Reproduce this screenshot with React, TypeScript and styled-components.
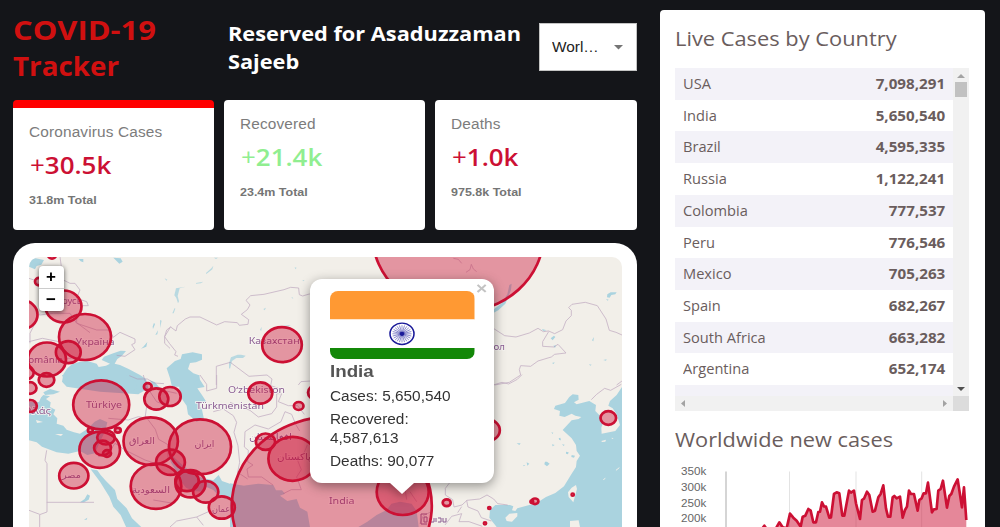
import React from "react";
import styled, { createGlobalStyle, css } from "styled-components";

const GlobalStyle = createGlobalStyle`
  * { box-sizing: border-box; }
  html, body { margin: 0; height: 527px; overflow: hidden; background: #141519; }
`;

const sans = `"Liberation Sans", Arial, sans-serif`;
const humanist = `"Open Sans", "Noto Sans", sans-serif`;
const RED = "#cc1034";

const widen = (k: number, origin = "left") => css`
  width: max-content;
  transform: scaleX(${k});
  transform-origin: ${origin} center;
`;

const Page = styled.div`
  display: flex;
  align-items: flex-start;
  gap: 23.5px;
  width: 1000px;
  height: 527px;
  padding: 10px 16px 0 13px;
  overflow: hidden;
`;
const Main = styled.main`
  display: flex;
  flex-direction: column;
  width: 623.5px;
  flex: none;
`;
const Header = styled.header`
  display: grid;
  grid-template-columns: 215px 310.5px 98px;
  align-items: center;
  height: 73px;
`;
const Title = styled.h1`
  margin: 0;
  padding-top: 1.5px;
  font: 700 27.5px/36.6px ${humanist};
  color: #d01010;
`;
const TitleLine = styled.span<{ $k: number }>`
  display: block;
  ${(p) => widen(p.$k)}
`;
const Subtitle = styled.h2`
  margin: 0;
  padding-top: 1px;
  font: 700 20.4px/27.6px ${humanist};
  color: #fff;
  ${widen(1.067)}
`;
const Select = styled.div`
  display: flex;
  align-items: center;
  justify-content: space-between;
  height: 48px;
  padding: 0 13px 0 12.5px;
  border: 1px solid #c4c4c4;
  background: #fff;
`;
const SelectValue = styled.span`
  font: 400 14px/20px ${sans};
  color: #222;
  ${widen(1.1)}
`;
const Stats = styled.section`
  display: grid;
  grid-template-columns: repeat(3, 1fr);
  gap: 10px;
  margin-top: 17px;
  height: 130px;
`;
const Card = styled.article<{ $active?: boolean }>`
  padding: 13.5px 16px;
  border-radius: 4px;
  background: #fff;
  border-top: ${(p) => (p.$active ? "8.5px solid #ff0000" : "0")};
`;
const CardLabel = styled.div`
  font: 400 14px/20px ${sans};
  color: #7c7c7c;
  letter-spacing: 0.13px;
  ${widen(1.1)}
`;
const CardValue = styled.div<{ $color: string }>`
  margin: 7px 0 0 1px;
  font: 600 24px/32px ${humanist};
  color: ${(p) => p.$color};
  ${widen(1.08)}
`;
const Plus = styled.span`
  font-weight: 400;
`;
const CardTotal = styled.div`
  margin-top: 12.5px;
  font: 700 11px/14px ${sans};
  color: #757575;
  ${widen(1.135)}
`;
const MapCard = styled.section`
  margin-top: 13px;
  padding: 14px 15px 14px 15.5px;
  height: 320px;
  border-radius: 22px 22px 0 0;
  background: #fff;
`;
const MapFrame = styled.div`
  position: relative;
  height: 300px;
  overflow: hidden;
  border-radius: 10px 10px 0 0;
  background: #f2efe9;
`;
const MapCanvas = styled.svg`
  display: block;
  width: 593px;
  height: 270px;
`;
const ZoomControl = styled.div`
  position: absolute;
  left: 10px;
  top: 8.5px;
  width: 25px;
  border-radius: 4px;
  background: #fff;
  box-shadow: 0 1px 5px rgba(0, 0, 0, 0.65);
`;
const ZoomButton = styled.div`
  height: 22.7px;
  font: 700 17px/22px ${sans};
  text-align: center;
  color: #000;
  & + & {
    border-top: 1px solid #ccc;
  }
`;
const Popup = styled.div`
  position: absolute;
  left: 281px;
  top: 21.5px;
  width: 184.5px;
  height: 204.5px;
  padding: 12px 20.5px;
  border-radius: 12px;
  background: #fff;
  color: #333;
  filter: drop-shadow(0 3px 6px rgba(0, 0, 0, 0.4));
  &::after {
    content: "";
    position: absolute;
    left: 80px;
    top: 204px;
    border: 12.5px solid transparent;
    border-top: 11px solid #fff;
    border-bottom: 0;
  }
`;
const Close = styled.span`
  position: absolute;
  right: 7.5px;
  top: 1px;
  font: 700 16px/17px ${sans};
  color: #c3c3c3;
  transform: scaleX(1.2);
`;
const Flag = styled.svg`
  display: block;
  width: 144.5px;
  height: 68.5px;
  border-radius: 8px;
`;
const PopupName = styled.div`
  margin: 2px 0 7px;
  font: 700 17.2px/20px ${sans};
  color: #555;
  ${widen(1.09)}
`;
const PopupLine = styled.div`
  margin-bottom: 4.3px;
  font: 400 13.8px/18.9px ${sans};
  ${widen(1.115)}
`;
const Side = styled.aside`
  width: 324.5px;
  height: 600px;
  flex: none;
  margin-top: -0.5px;
  padding: 15px 15px;
  border-radius: 4px;
  background: #fff;
  color: #6a5d5d;
`;
const SideTitle = styled.h3<{ $k: number }>`
  margin: 0;
  font: 400 20.6px/27px ${humanist};
  ${(p) => widen(p.$k)}
`;
const ListBox = styled.div`
  display: grid;
  grid-template: 328px 14.7px / 278px 16px;
  margin: 16.5px 0 15.5px;
`;
const List = styled.div`
  overflow: hidden;
`;
const Row = styled.div`
  display: flex;
  justify-content: space-between;
  height: 31.72px;
  padding: 0 8px;
  font: 400 13.8px/32px ${humanist};
  &:nth-child(odd) {
    background: #f3f2f8;
  }
`;
const Country = styled.span`
  ${widen(1.06)}
`;
const Count = styled.strong`
  ${widen(1.1, "right")}
`;
const VTrack = styled.div`
  display: flex;
  flex-direction: column;
  align-items: center;
  padding: 6px 0 5px;
  background: #f1f1f1;
`;
const HTrack = styled.div`
  display: flex;
  align-items: center;
  justify-content: space-between;
  padding: 0 5px;
  background: #f1f1f1;
`;
const Thumb = styled.div`
  width: 12.5px;
  height: 15px;
  margin: 4px 0 auto;
  background: #c1c1c1;
`;
const Corner = styled.div`
  background: #dcdcdc;
`;
const Arrow = styled.svg`
  display: block;
`;
const Chart = styled.svg`
  display: block;
  margin: 8px 0 0 0;
  width: 294px;
  height: 70px;
`;

const countries: [string, string][] = [
  ["USA", "7,098,291"],
  ["India", "5,650,540"],
  ["Brazil", "4,595,335"],
  ["Russia", "1,122,241"],
  ["Colombia", "777,537"],
  ["Peru", "776,546"],
  ["Mexico", "705,263"],
  ["Spain", "682,267"],
  ["South Africa", "663,282"],
  ["Argentina", "652,174"],
  ["", ""],
];

// cx, cy, rx, ry
const circles: number[][] = [
  [458, 236, 85.3, 76.2],
  [331.8, 505.7, 100, 89],
  [21.5, 314.7, 16, 14.5],
  [63.5, 306.5, 18, 16],
  [85, 337, 26, 23],
  [47, 359.5, 19, 17],
  [68.3, 352.2, 12.4, 11],
  [46.5, 380, 7.8, 6.8],
  [26.5, 372.7, 7.2, 6.6],
  [30, 388, 6.5, 5.8],
  [30.5, 406, 6.3, 6],
  [52, 255, 4, 3.6],
  [39, 281.6, 4, 3.7],
  [101.2, 404.8, 28, 24.5],
  [147.8, 386.7, 3.9, 3.5],
  [156.3, 399, 12, 10.6],
  [170, 396.5, 10.7, 9.5],
  [150.7, 441.2, 27.2, 23.8],
  [200, 446.8, 31, 27.4],
  [99.7, 449.8, 20.3, 18],
  [106, 437.5, 8.8, 7],
  [102.5, 448, 8.4, 7.3],
  [107, 453.5, 4, 3.3],
  [90.3, 430.2, 2.4, 2.2],
  [117.8, 430.2, 2.9, 2.4],
  [73.8, 475.7, 14.6, 12.8],
  [170.5, 462.3, 14.4, 12.6],
  [156, 486.2, 25.3, 22.6],
  [190.5, 483.8, 15, 13.6],
  [187, 481, 11.7, 10.2],
  [205.7, 491.8, 12.6, 10.8],
  [221.8, 507.5, 13, 11.2],
  [292.7, 458.8, 24.3, 22],
  [265.5, 441.7, 9.6, 8.2],
  [298.7, 406, 4.8, 4],
  [260.3, 393, 12, 10.6],
  [316, 392.5, 8, 7],
  [402.7, 492, 26, 23],
  [282, 344.7, 19.8, 17.5],
  [487, 430.2, 12.8, 11],
  [608.3, 418, 7.8, 6.8],
  [446.7, 502.7, 4, 3.4],
  [489.3, 508, 1.1, 1],
  [485, 523.3, 1.1, 1],
  [535, 501.3, 3.4, 2.8],
  [531.8, 501.8, 1.3, 1.1],
  [572.7, 494.7, 1.1, 1],
];

// text, left, baseline, width
const labels: [string, number, number, number][] = [
  ["Беларусь", 40, 304, 42],
  ["Україна", 75.5, 345, 39],
  ["România", 22, 362.5, 41],
  ["Türkiye", 86, 408, 36],
  ["Ελλάς", 21, 413.5, 30],
  ["Türkmenistan", 196, 408.5, 68],
  ["Oʻzbekiston", 228, 392.7, 57],
  ["Казахстан", 248.7, 344.3, 51],
  ["العراق", 129, 444, 26],
  ["ایران", 194.5, 446.5, 20],
  ["مصر", 62, 478, 19],
  ["السعودية", 132, 492.5, 38],
  ["عمان", 212, 512, 18],
  ["افغانستان", 249, 440, 43],
  ["پاکستان", 277, 459.5, 34],
  ["India", 329, 504, 25.5],
  ["Монгол", 469, 349.7, 36],
];

const cases =
  "300,345 330,335 343,317 352,330 370,330 378,325 388,307 398,322 410,325 420,281 430,293 440,302 452,320 458,290 466,287 475,267 482,272 490,307 498,307 505,276 510,275 516,247 522,259 528,260 538,293 543,292 552,222 560,217 568,220 577,287 583,287 597,212 603,218 612,212 618,250 630,297 636,240 642,236 651,215 658,225 668,275 675,272 685,232 692,222 700,196 708,265 714,290 721,290 728,232 733,228 740,235 750,230 758,293 765,270 771,260 777,212 783,222 792,222 803,272 808,240 815,235 821,220 828,220 834,188 846,277 852,268 860,267 865,212 872,207 879,182 891,263 898,228 904,222 912,200 923,178 936,262 942,202 949,300";

const WorldMap = () => (
  <MapCanvas viewBox="29 257 593 270">
    <g fill="#aad3df">
      {/* Eastern Europe and the Black Sea */}
      <g transform="translate(0 235) scale(.3333)">
        <path d="M87 75l20-5 25 5-8 14-14 4-5 10-18-8zM340 68l22 2 6 10-10 6zM236 72l14 0 0 10-8-3zM430 335l12-14-3 14-16 6zM458 275l4-12 3 5-6 14zM466 300l8-14-2 12z" />
        <path d="M186 440L190 418 202 400 216 388 240 380 262 378 290 386 296 396 318 392 330 386 305 375 312 365 340 355 362 347 378 348 366 362 352 372 344 386 360 390 386 402 420 420 438 432 445 460 415 478 300 470 200 455z" />
      </g>
      {/* Mediterranean, Red Sea, Caspian, Persian Gulf */}
      <g transform="translate(0 375) scale(.3333)">
        <path d="M186 0L192 15 216 26 240 22 270 20 300 30 350 50 395 50 412 38 405 18 380 0z" />
        <path d="M87 80L100 62 118 72 130 60 150 64 138 72 152 82 150 96 166 104 160 118 172 130 170 146 190 152 200 164 222 172 240 176 262 162 284 140 300 132 322 142 316 168 300 200 285 235 262 240 240 228 205 236 170 232 150 224 126 215 110 202 87 196z" />
        <path d="M130 52l20-10 30 8-20 8-25 2z" />
        <path d="M272 283L292 286 302 300 318 318 345 345 352 372 380 400 396 430 428 460 380 460 362 420 340 395 328 365 300 320z" />
        <path d="M522 0L538 30 538 50 548 75 560 92 564 118 590 140 612 132 606 104 596 88 620 82 606 60 592 40 614 36 600 14 598 0z" />
        <path d="M508 225L525 250 550 272 575 290 605 308 640 316 656 300 666 318 700 330 760 335 760 456 700 440 706 410 690 376 660 366 640 345 618 335 606 350 580 348 558 338 545 322 530 290 512 262z" />
        <path d="M240 382l14-10 8-14 8 4-4 12-14 8zM252 434l10-6-2 6z" />
        <path d="M450 16l14 5 16 18-10 1-14-12z" />
      </g>
      {/* Kazakh steppe */}
      <g transform="translate(160 235) scale(.3333)">
        <path d="M20 400L45 378 62 372 66 358 98 352 126 358 126 374 108 382 90 384 84 402 100 415 115 420 116 436 100 440 106 455 36 455 30 430z" />
        <path opacity=".8" d="M48 160l29-5-18 5-6 23 4 16-3 6-5-16-6-8zM108 144l22-4-8 5-14 1zM138 114l16-14 6-8-3 11-18 14zM162 68l12 0-6 4zM37 235l7-16 2 2-5 14zM0 255l5 2-5 22zM14 130l8 4-3 3zM207 385l6-18 20-8 10 0 14 3-8 7-20 0-13 9-6 24-3-4zM310 222l8-4-4 8zM300 285l5-10-1 12zM368 272l24-2-6 4zM404 97l6 1-4 5zM396 185l4 6-5-2zM428 135l6 1-5 3z" />
      </g>
      {/* Arabian Sea and Bay of Bengal */}
      <g transform="translate(230 375) scale(.3333)">
        <path d="M0 325L40 332 85 326 130 330 138 346 156 346 165 356 150 362 172 378 200 372 210 398 232 410 240 456 0 456z" />
        <path d="M385 456L412 440 440 420 470 405 484 386 510 380 545 386 560 408 566 456z" />
      </g>
      {/* Baikal and Mongolia */}
      <g transform="translate(430 235) scale(.3333)">
        <path d="M180 232L215 205 232 178 238 150 245 146 243 165 226 206 205 226 190 234zM532 178l10-6 18 0-4 6-12 2-5 8-8-1zM362 310l10-8 4 4-8 10zM370 332l8-1-3 8zM486 316l6-10-2 13zM336 282l14 4-10 2zM366 384l8-2-3 5zM477 388l8 1-4 3zM520 375l10-2-2 4zM528 192l8 2-3 3z" />
      </g>
      {/* East Asian seas */}
      <g transform="translate(430 375) scale(.3333)">
        <path d="M576 36L560 60 540 78 535 92 548 100 560 118 570 150 556 168 515 176 514 158 520 140 510 122 496 108 498 90 478 78 440 88 432 82 446 74 445 60 428 58 418 66 405 84 376 92 372 102 390 108 388 122 404 126 425 116 436 122 454 126 446 132 425 136 414 148 398 165 425 190 438 210 440 228 450 242 440 258 438 276 424 298 402 334 376 354 348 366 320 384 262 400 256 408 246 406 250 394 240 390 215 390 196 390 180 405 178 428 200 456 576 456z" />
        <path d="M345 260l6 0 8 6-8 8-8-6zM290 262l8 4-6 6zM280 270l6 0-5 4zM386 190l5-2 2 8-5-1zM408 230l8 2-2 6-6-2zM364 172l6 1-2 4zM366 208l8 2-6 4zM396 208l8 1-3 4zM260 205l12 0-4 5zM425 240l10 2-3 6-8-2z" />
      </g>
    </g>
    <g fill="#f2efe9">
      <g transform="translate(430 375) scale(.3333)">
        <path d="M226 428L238 416 262 414 262 424 246 440 230 438zM425 338L438 330 441 342 430 382 416 366 414 352zM420 438L446 436 450 456 420 456zM514 198l14-4-2 6-10 1zM545 188l6 2-5 2z" />
        <path d="M520 314l6-4M558 286l10-8" stroke="#f2efe9" strokeWidth="3" />
      </g>
      <path d="M32 392l10 3-3 7-10 0zM36 420l7 2-6 1zM55 434l8 0-2 2zM88 429l8-1-5 4z" />
    </g>
    {/* Country borders */}
    <g fill="none" stroke="#b094b4" strokeWidth="2.4" opacity=".7" strokeLinejoin="round">
      <g transform="translate(0 235) scale(.3333)">
        <path d="M87 130l18 6 20 20M190 135l20 10 15 0 15 20-10 25 30 10 5 12-18 0-25-10M120 235l-30 60 0 30M120 240l40-5 50 0 20 30 60 20 40 0 10 22 20-15 45 20 0 12-10 5 10 15-30 20-25-3M180 330l20 40 15 0M87 320l40-10 50 10 20 30M512 275l-18 30 0 20 16 15M180 66l4 28M230 235l0 28 40 30M388 422l24 10 30 0 20 12 30 2M87 370l40 12 50 0" />
      </g>
      <g transform="translate(0 375) scale(.3333)">
        <path d="M140 226l-5 30 6 10 0 145-22 8 0 37M140 382l142 0M87 406l32 12M325 130l60 5 30-10 25 5M440 95l-4 28 30 40 10 30 28 16 0 45M345 205l30 20 60 30 30 10M345 205l-20 30-30 10M460 375l60 10 20-20M510 456l20-18 60-12 40-18M590 426l20 25M430 0l5 18 40 25 55 12M450 50l20 30 25 10M600 0l20 28 0 20 30-8 0-40M640 110l30-8 30 20 10 20-8 30 12 40 5 50-6 30 30 20" />
      </g>
      <g transform="translate(160 235) scale(.3333)">
        <path d="M54 364l-10-4 4-10-20-25-14-20 6-20 12-9 16 12 4-16 24-20 14-6 30 0 50 24 24-10 38 3 6 8 26-3 2-14-22-16 18-14 8-14-12-14 14-14 40-4 60-14 20-7 24 2 2 20 10 4 20-6 60 20M169 450l0-56 42-12 56 42 54-4 15 12-4 20 24 8M415 450l8-10 30-2" />
      </g>
      <g transform="translate(230 375) scale(.3333)">
        <path d="M0 82l60 24 25 20 40-10 15-20 0-40 15 0-10 24 30 12 28 0 20 26M45 170l30-20 40 12 38-22 12-30 20 8 12 30 12 20M45 170l-2 46 12 10-2 34 16 10-18 12 4 24 40 0 34 24M160 356l24-12 30 0-14-38 14-22-12-30 20-20 10-24M505 330l20 10 5 34M540 350l20 30M530 330l-10 20M600 412l-20 10-10 24" />
      </g>
      <g transform="translate(430 235) scale(.3333)">
        <path d="M190 280l34 22 34 4 40-12 26-14 16 10 16-2 18 8 24-12 10-26 16-16 0-16-8-8 10-10 40-6 36 10 26 40 10 34 20 6 18 8M356 290l-18 30 0 14 34 2 12-8 24 26-34 4-10 8-40 12-22 16-30-2-4 12 4 16-34 22-44 8M560 450l16-12" />
        <path d="M70 70l15 3 10 12M108 112l12-8 4-16 6 14 10 8" />
      </g>
      <g transform="translate(430 375) scale(.3333)">
        <path d="M190 30l26-8 20 5 26-14 14-14M484 74l16-16 24-18 18 6 32-18M60 322l-14 18 0 20 22 14 4 22 24-6 15-14 38-4 22-12 20 12 12 14 30 4M110 376l4 20 30 12 10 20 30 10M45 450l20-26 30-8-8 24 30 0 40 14M95 395l-12 18" />
      </g>
    </g>
    <g fontFamily='"Noto Sans", "DejaVu Sans", sans-serif' fontSize="9.4" fill="#8a5c92" stroke="#f7f5f1" strokeWidth="1.6" paintOrder="stroke">
      {labels.map(([t, x, y, w]) => (
        <text key={t} x={x} y={y} textLength={w} lengthAdjust="spacingAndGlyphs">{t}</text>
      ))}
    </g>
    <g fill="none" stroke="#8a5c92" strokeWidth="1">
      <path d="M427 514h-6v10h6M424 517h3v5h-3zM430 518v4h4v-4M436 518v4M438 518h3v4h-3M443 518v4h3v-4" />
    </g>
    <g fill={RED} fillOpacity=".4" stroke={RED} strokeWidth="2.7">
      {circles.map(([cx, cy, rx, ry], i) => (
        <ellipse key={i} cx={cx} cy={cy} rx={rx} ry={ry} />
      ))}
    </g>
  </MapCanvas>
);

const IndiaFlag = () => (
  <Flag viewBox="0 0 144.5 68.5" preserveAspectRatio="none">
    <path fill="#ff9933" d="M0 0h144.5v28.5H0z" />
    <path fill="#fff" d="M0 28.5h144.5v28.5H0z" />
    <path fill="#138808" d="M0 57h144.5v11.5H0z" />
    <g transform="translate(72 42.8) scale(1.12 1)">
      <circle r="10.7" fill="none" stroke="#1a1a99" strokeWidth="1.4" />
      <g stroke="#3a3aa8" strokeWidth=".5">
        {Array.from({ length: 12 }, (_, i) => (
          <path key={i} d="M0-8.6V8.6" transform={`rotate(${i * 15})`} />
        ))}
      </g>
      <circle r="2.1" fill="#1a1a99" />
    </g>
  </Flag>
);

const CardNumber = ({ color, value }: { color: string; value: string }) => (
  <CardValue $color={color}>
    <Plus>+</Plus>
    {value}
  </CardValue>
);

export default function App() {
  return (
    <>
      <GlobalStyle />
      <Page>
        <Main>
          <Header>
            <Title>
              <TitleLine $k={1.125}>COVID-19</TitleLine>
              <TitleLine $k={1.01}>Tracker</TitleLine>
            </Title>
            <Subtitle>Reserved for Asaduzzaman<br />Sajeeb</Subtitle>
            <Select>
              <SelectValue>Worl…</SelectValue>
              <Arrow width="9" height="5" viewBox="0 0 9 5"><path d="M0 0h9L4.5 4.5z" fill="#757575" /></Arrow>
            </Select>
          </Header>
          <Stats>
            <Card $active>
              <CardLabel>Coronavirus Cases</CardLabel>
              <CardNumber color={RED} value="30.5k" />
              <CardTotal>31.8m Total</CardTotal>
            </Card>
            <Card>
              <CardLabel>Recovered</CardLabel>
              <CardNumber color="lightgreen" value="21.4k" />
              <CardTotal>23.4m Total</CardTotal>
            </Card>
            <Card>
              <CardLabel>Deaths</CardLabel>
              <CardNumber color={RED} value="1.0k" />
              <CardTotal>975.8k Total</CardTotal>
            </Card>
          </Stats>
          <MapCard>
            <MapFrame>
              <WorldMap />
              <ZoomControl>
                <ZoomButton>+</ZoomButton>
                <ZoomButton>−</ZoomButton>
              </ZoomControl>
              <Popup>
                <Close>×</Close>
                <IndiaFlag />
                <PopupName>India</PopupName>
                <PopupLine>Cases: 5,650,540</PopupLine>
                <PopupLine>Recovered:<br />4,587,613</PopupLine>
                <PopupLine>Deaths: 90,077</PopupLine>
              </Popup>
            </MapFrame>
          </MapCard>
        </Main>
        <Side>
          <SideTitle $k={1.06}>Live Cases by Country</SideTitle>
          <ListBox>
            <List>
              {countries.map(([name, n]) => (
                <Row key={name}>
                  <Country>{name}</Country>
                  <Count>{n}</Count>
                </Row>
              ))}
            </List>
            <VTrack>
              <Arrow width="8" height="4"><path d="M0 4h8L4 0z" fill="#a3a3a3" /></Arrow>
              <Thumb />
              <Arrow width="8" height="4"><path d="M0 0h8L4 4z" fill="#505050" /></Arrow>
            </VTrack>
            <HTrack>
              <Arrow width="5" height="7"><path d="M5 0v7L1 3.5z" fill="#a3a3a3" /></Arrow>
              <Arrow width="5" height="7"><path d="M0 0v7L4 3.5z" fill="#a3a3a3" /></Arrow>
            </HTrack>
            <Corner />
          </ListBox>
          <SideTitle $k={1.057}>Worldwide new cases</SideTitle>
          <Chart viewBox="675 461 294 70">
            <g fontFamily="Liberation Sans, Arial, sans-serif" fontSize="10.4" fill="#666">
              {["350k", "300k", "250k", "200k"].map((t, i) => (
                <text key={t} x="681" y={474.7 + i * 15.9} textLength="25.3" lengthAdjust="spacingAndGlyphs">{t}</text>
              ))}
            </g>
            <path d="M726 471.5v70" stroke="#bfbfbf" strokeWidth="1.3" />
            <path d="M789.5 471.5v70M856 471.5v70M921.7 471.5v70" stroke="#e3e3e3" />
            <g transform="translate(650 420) scale(.3333)">
              <polygon points={`${cases} 949,400 300,400`} fill={RED} fillOpacity=".5" />
              <polyline points={cases} fill="none" stroke={RED} strokeWidth="8" strokeLinejoin="round" />
            </g>
          </Chart>
        </Side>
      </Page>
    </>
  );
}
